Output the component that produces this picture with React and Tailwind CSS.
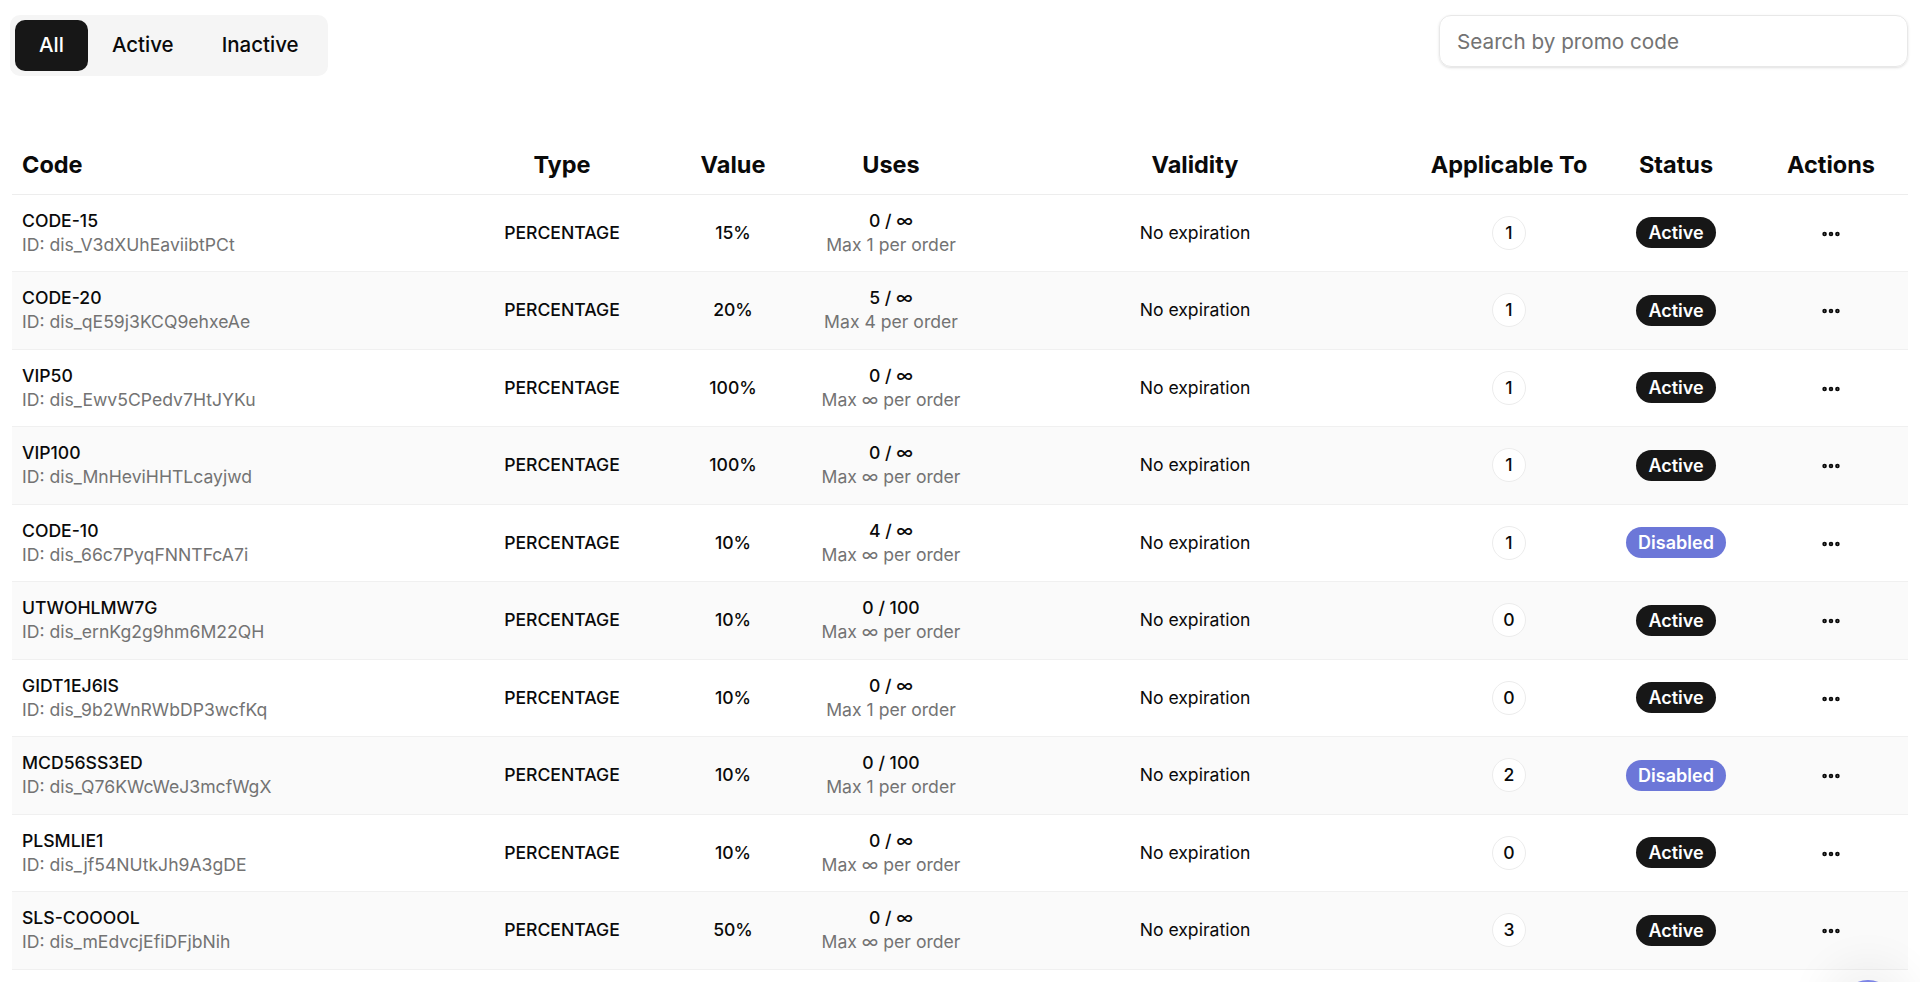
import React from 'react';
import { MoreHorizontal } from 'lucide-react';

const rows = [
  { code: 'CODE-15', id: 'dis_V3dXUhEaviibtPCt', value: '15%', uses: '0 / ∞', max: 'Max 1 per order', applies: 1, status: 'Active' },
  { code: 'CODE-20', id: 'dis_qE59j3KCQ9ehxeAe', value: '20%', uses: '5 / ∞', max: 'Max 4 per order', applies: 1, status: 'Active' },
  { code: 'VIP50', id: 'dis_Ewv5CPedv7HtJYKu', value: '100%', uses: '0 / ∞', max: 'Max ∞ per order', applies: 1, status: 'Active' },
  { code: 'VIP100', id: 'dis_MnHeviHHTLcayjwd', value: '100%', uses: '0 / ∞', max: 'Max ∞ per order', applies: 1, status: 'Active' },
  { code: 'CODE-10', id: 'dis_66c7PyqFNNTFcA7i', value: '10%', uses: '4 / ∞', max: 'Max ∞ per order', applies: 1, status: 'Disabled' },
  { code: 'UTWOHLMW7G', id: 'dis_ernKg2g9hm6M22QH', value: '10%', uses: '0 / 100', max: 'Max ∞ per order', applies: 0, status: 'Active' },
  { code: 'GIDT1EJ6IS', id: 'dis_9b2WnRWbDP3wcfKq', value: '10%', uses: '0 / ∞', max: 'Max 1 per order', applies: 0, status: 'Active' },
  { code: 'MCD56SS3ED', id: 'dis_Q76KWcWeJ3mcfWgX', value: '10%', uses: '0 / 100', max: 'Max 1 per order', applies: 2, status: 'Disabled' },
  { code: 'PLSMLIE1', id: 'dis_jf54NUtkJh9A3gDE', value: '10%', uses: '0 / ∞', max: 'Max ∞ per order', applies: 0, status: 'Active' },
  { code: 'SLS-COOOOL', id: 'dis_mEdvcjEfiDFjbNih', value: '50%', uses: '0 / ∞', max: 'Max ∞ per order', applies: 3, status: 'Active' },
];

function StatusBadge({ status }) {
  if (status === 'Disabled') {
    return (
      <span className="inline-flex items-center h-[31px] px-[12px] rounded-full bg-[#6c77d8] text-white text-[18px] font-semibold">
        Disabled
      </span>
    );
  }
  return (
    <span className="inline-flex items-center h-[31px] px-[12px] rounded-full bg-[#171717] text-white text-[18px] font-semibold">
      Active
    </span>
  );
}

export default function App() {
  return (
    <div className="relative min-h-screen h-[982px] overflow-hidden bg-white text-[#0a0a0a] font-['Inter','Liberation_Sans',sans-serif]">
      <div className="flex items-start justify-between pl-[10px] pr-[12px] pt-[15px]">
        <div className="flex items-center p-[5px] rounded-[10px] bg-[#f5f5f5]">
          <button className="h-[51px] px-[24px] rounded-[10px] bg-[#171717] text-white text-[20.5px] font-medium">All</button>
          <button className="h-[51px] px-[24px] rounded-[10px] text-[20.5px] font-medium">Active</button>
          <button className="h-[51px] px-[24px] rounded-[10px] text-[20.5px] font-medium">Inactive</button>
        </div>
        <input
          type="text"
          placeholder="Search by promo code"
          className="w-[469px] h-[52px] px-[17px] rounded-[12px] border border-[#e8e8e8] shadow-sm text-[20.7px] placeholder:text-[#737373] outline-none"
        />
      </div>

      <div className="mt-[60px] pl-[12px] pr-[12px]">
        <table className="w-full table-fixed border-collapse">
          <colgroup>
            <col className="w-[458px]" />
            <col className="w-[184px]" />
            <col className="w-[158px]" />
            <col className="w-[158px]" />
            <col className="w-[450px]" />
            <col className="w-[178px]" />
            <col className="w-[156px]" />
            <col />
          </colgroup>
          <thead>
            <tr className="h-[58px] border-b border-[#ededed] text-[23.5px] font-bold">
              <th className="text-left pl-[10px]">Code</th>
              <th className="text-center">Type</th>
              <th className="text-center">Value</th>
              <th className="text-center">Uses</th>
              <th className="text-center">Validity</th>
              <th className="text-center">Applicable To</th>
              <th className="text-center">Status</th>
              <th className="text-center">Actions</th>
            </tr>
          </thead>
          <tbody className="text-[17.6px]">
            {rows.map((r, i) => (
              <tr key={r.code} className={`h-[77.5px] border-b border-[#f0f0f0] ${i % 2 === 1 ? 'bg-[#fafafa]' : 'bg-white'}`}>
                <td className="pl-[10px]">
                  <div className="font-medium leading-[24px]">{r.code}</div>
                  <div className="text-[#737373] leading-[24px]">ID: {r.id}</div>
                </td>
                <td className="text-center font-medium">PERCENTAGE</td>
                <td className="text-center font-medium">{r.value}</td>
                <td className="text-center">
                  <div className="font-medium leading-[24px]">{r.uses}</div>
                  <div className="text-[#737373] leading-[24px]">{r.max}</div>
                </td>
                <td className="text-center">No expiration</td>
                <td className="text-center">
                  <span className="inline-flex items-center justify-center w-[34px] h-[34px] rounded-full border border-[#ececec] bg-white font-medium">
                    {r.applies}
                  </span>
                </td>
                <td className="text-center">
                  <StatusBadge status={r.status} />
                </td>
                <td className="text-center">
                  <MoreHorizontal className="inline-block w-[22px] h-[22px]" strokeWidth={3} />
                </td>
              </tr>
            ))}
          </tbody>
        </table>
      </div>

      <div className="absolute right-[24px] bottom-[-54px] w-[56px] h-[56px] rounded-full bg-[#7c84e6] shadow-[0_0_40px_20px_rgba(0,0,0,0.05)]" />
    </div>
  );
}
